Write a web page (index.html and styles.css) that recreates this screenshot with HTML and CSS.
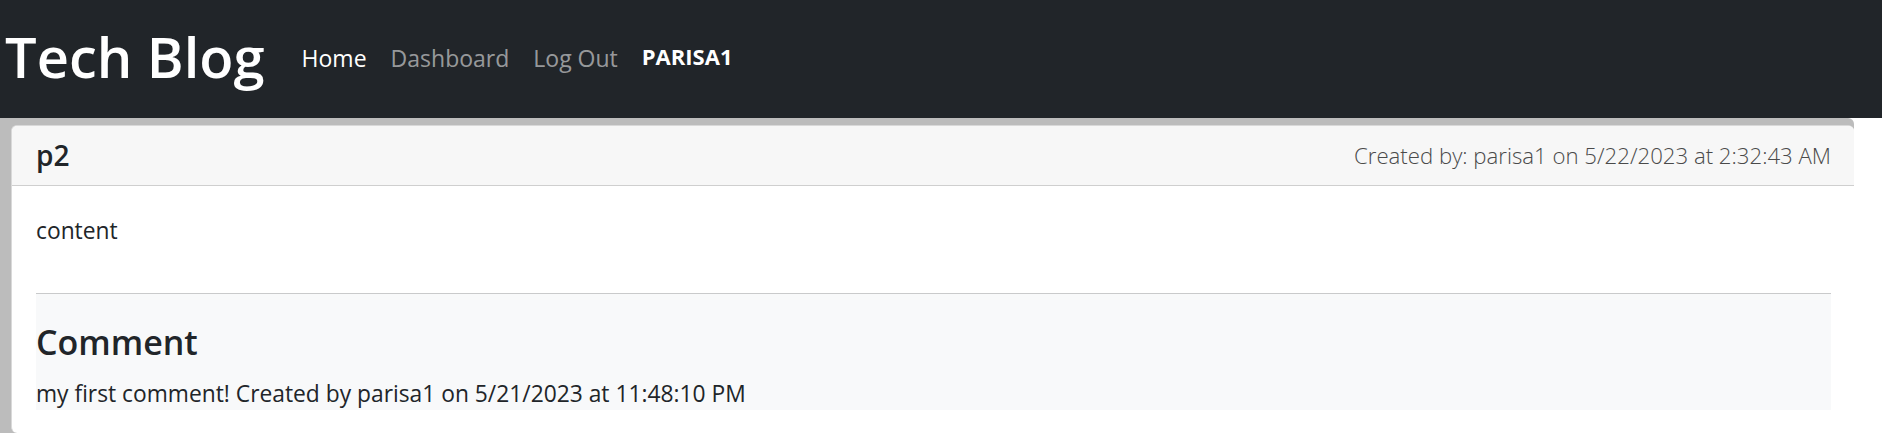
FILE: index.html
```html
<!DOCTYPE html>
<html lang="en">
<head>
<meta charset="utf-8">
<title>Tech Blog</title>
<link rel="stylesheet" href="styles.css">
</head>
<body>
<nav class="navbar">
  <a class="brand" href="#">Tech Blog</a>
  <ul class="nav-links">
    <li><a class="nav-link active" href="#">Home</a></li>
    <li><a class="nav-link" href="#">Dashboard</a></li>
    <li><a class="nav-link" href="#">Log Out</a></li>
    <li><span class="user">PARISA1</span></li>
  </ul>
</nav>
<main class="wrapper">
  <article class="card">
    <header class="card-header">
      <h2 class="post-title">p2</h2>
      <span class="post-meta">Created by: parisa1 on 5/22/2023 at 2:32:43 AM</span>
    </header>
    <div class="card-body">
      <p class="post-content">content</p>
      <hr class="divider">
      <section class="comments">
        <h3 class="comments-title">Comment</h3>
        <p class="comment">my first comment! Created by parisa1 on 5/21/2023 at 11:48:10 PM</p>
      </section>
    </div>
  </article>
</main>
</body>
</html>
```
FILE: styles.css
```css
* { box-sizing: border-box; }
html, body { margin: 0; padding: 0; }
body {
  font-family: "Open Sans", "Noto Sans", sans-serif;
  font-size: 22.8px;
  line-height: 1.5;
  color: #212529;
  background: #fff;
}
.navbar {
  display: flex;
  align-items: center;
  height: 118px;
  background: #212529;
  padding: 0 0 0 5px;
}
.brand {
  font-size: 56px;
  font-weight: 600;
  color: #fff;
  text-decoration: none;
  line-height: 1.2;
  margin-right: 25px;
  padding-bottom: 4px;
}
.nav-links {
  display: flex;
  align-items: center;
  list-style: none;
  margin: 0;
  padding: 0;
  padding-bottom: 2px;
}
.nav-link {
  display: block;
  padding: 0 12px;
  font-size: 23px;
  color: rgba(255,255,255,.55);
  text-decoration: none;
}
.nav-link.active { color: #fff; }
.user {
  display: block;
  padding: 0 12px 4px;
  color: #fff;
  font-weight: 700;
  font-size: 22px;
}
.wrapper {
  margin-right: 28px;
  padding: 7px 0 0 11px;
  background: #bcbcbc;
  border-radius: 0 6px 0 0;
}
.card {
  background: #fff;
  border-left: 1px solid #d9d9d9;
  border-top: 1px solid #d9d9d9;
  border-radius: 6px 6px 0 6px;
  height: 308px;
  overflow: hidden;
}
.card-header {
  display: flex;
  justify-content: space-between;
  align-items: center;
  height: 60px;
  padding: 0 23px 0 24px;
  background: #f7f7f7;
  border-bottom: 1px solid #cfcfcf;
}
.post-title {
  margin: 0;
  font-size: 28px;
  font-weight: 600;
  line-height: 1.2;
}
.post-meta {
  font-weight: 300;
  font-size: 22.2px;
  color: #4a4a4a;
}
.card-body {
  padding: 28px 23px 0 24px;
}
.post-content {
  margin: 0 0 45px;
}
.divider {
  margin: 0;
  border: 0;
  border-top: 1px solid #c9cacb;
}
.comments {
  background: #f8f9fa;
  padding: 28px 0 0;
  height: 116px;
}
.comments-title {
  margin: 0 0 14px;
  font-size: 34px;
  font-weight: 600;
  line-height: 1.2;
}
.comment { margin: 0; }
```
